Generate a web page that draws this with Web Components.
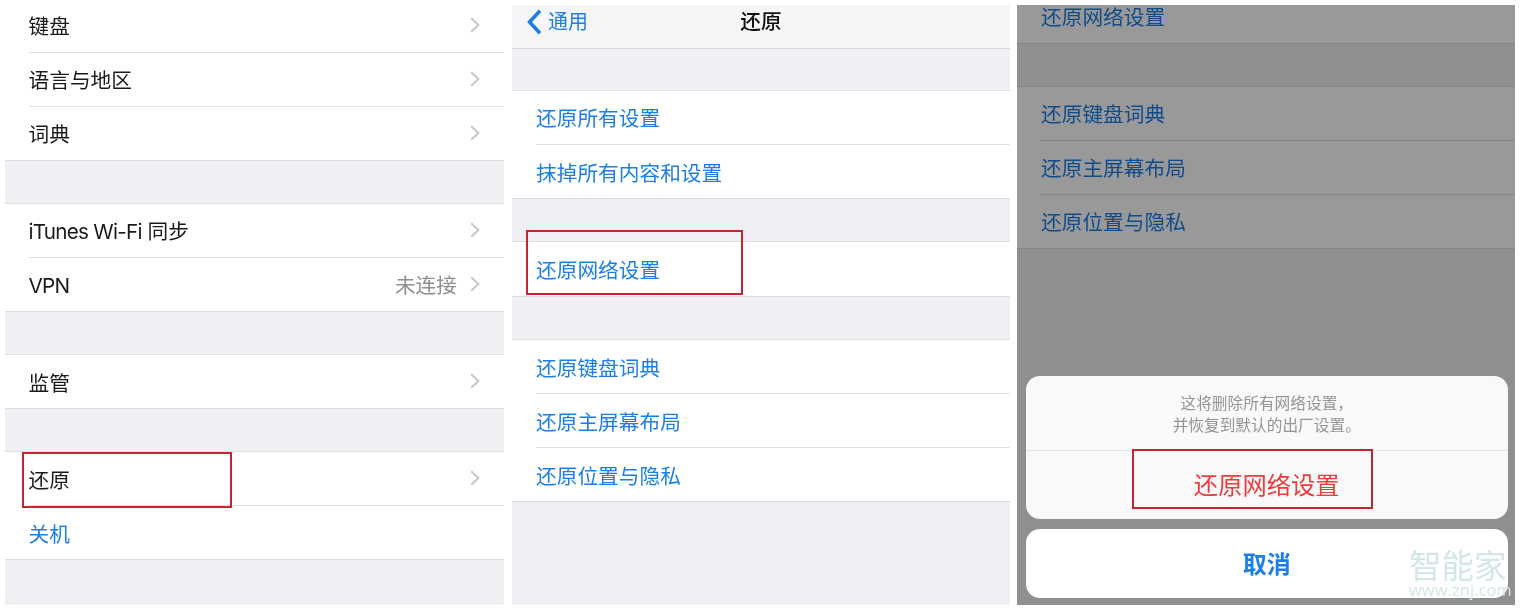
<!DOCTYPE html>
<html lang="zh-CN"><head><meta charset="utf-8"><title>还原</title>
<style>
html,body{margin:0;background:#fff}
body{font-family:"Inter","Noto Sans CJK SC",sans-serif;width:1520px;height:610px;overflow:hidden}
.lat{letter-spacing:-.75px}
</style></head><body>
<phone-stage>
  <settings-panel shift="-6.5" style="width:499px;--inset:23.5px">
    <settings-group><settings-row chevron>键盘</settings-row><settings-row chevron>语言与地区</settings-row><settings-row chevron last>词典</settings-row></settings-group>
    <settings-group><settings-row chevron><span class="lat">iTunes Wi-Fi</span> 同步</settings-row><settings-row chevron last detail="未连接"><span class="lat">VPN</span></settings-row></settings-group>
    <settings-group><settings-row chevron last>监管</settings-row></settings-group>
    <settings-group><settings-row chevron>还原</settings-row><settings-row last tone="link">关机</settings-row></settings-group>
    <red-box style="left:17px;top:447px;width:206px;height:52px"></red-box>
  </settings-panel>
  <settings-panel style="width:498px;--row:54.2px;--inset:24px">
    <nav-bar back="通用">还原</nav-bar>
    <settings-group><settings-row tone="link">还原所有设置</settings-row><settings-row last tone="link">抹掉所有内容和设置</settings-row></settings-group>
    <settings-group><settings-row last tone="link">还原网络设置</settings-row></settings-group>
    <settings-group><settings-row tone="link">还原键盘词典</settings-row><settings-row tone="link">还原主屏幕布局</settings-row><settings-row last tone="link">还原位置与隐私</settings-row></settings-group>
    <red-box style="left:14px;top:225px;width:213px;height:61px"></red-box>
  </settings-panel>
  <settings-panel shift="-15.5" style="width:498px;--inset:24px">
    <settings-group><settings-row last tone="link">还原网络设置</settings-row></settings-group>
    <settings-group><settings-row tone="link">还原键盘词典</settings-row><settings-row tone="link">还原主屏幕布局</settings-row><settings-row last tone="link">还原位置与隐私</settings-row></settings-group>
    <action-sheet message="这将删除所有网络设置，&#10;并恢复到默认的出厂设置。" action="还原网络设置" cancel="取消"></action-sheet>
    <red-box style="left:115px;top:444px;width:237px;height:56px"></red-box>
    <brand-mark></brand-mark>
  </settings-panel>
</phone-stage>
<script>
const def=(name,html)=>customElements.define(name,class extends HTMLElement{
  connectedCallback(){ if(this.shadowRoot) return; const r=this.attachShadow({mode:'open'}); r.innerHTML=typeof html==='function'?html(this):html; }
});
def('phone-stage',`<style>:host{display:flex;padding:5px;height:600px;width:1510px;font-size:20.7px}
 ::slotted(settings-panel:nth-child(1)){margin-right:8px}::slotted(settings-panel:nth-child(2)){margin-right:7px}</style><slot></slot>`);
def('settings-panel',h=>`<style>:host{display:block;position:relative;height:600px;overflow:hidden;background:#efeff4;flex:none;filter:blur(.35px)}
 .in{margin-top:${h.getAttribute('shift')||0}px}</style><div class="in"><slot></slot></div>`);
def('settings-group',`<style>:host{display:block;background:#fff;border-bottom:1px solid #dcdce0;box-shadow:0 -1px 0 #dedee2;margin-bottom:43.3px;box-sizing:border-box}</style><slot></slot>`);
def('settings-row',h=>{
 const link=h.getAttribute('tone')==='link',d=h.getAttribute('detail');
 return `<style>:host{display:block;color:${link?'#1c7fe6':'#1a1a1a'}}
 .r{height:calc(var(--row,54px) - 1px);display:flex;align-items:center;padding:0 24px 0 var(--inset,24px);box-sizing:border-box;line-height:1}
 .t{flex:1;white-space:nowrap;padding-top:5px}
 .d{color:#8e8e93;margin-right:13px;padding-top:5px}
 svg{display:block;width:10px;height:16px;margin-bottom:1px}
 .s{height:1px;background:#e0e0e3;margin-left:var(--inset,24px)}</style>
 <div class="r"><span class="t"><slot></slot></span>${d?`<span class="d">${d}</span>`:''}${h.hasAttribute('chevron')?`<svg viewBox="0 0 10 16"><path d="M1.2 1.2 8.4 8 1.2 14.8" fill="none" stroke="#c7c7cc" stroke-width="2"/></svg>`:''}</div>
 ${h.hasAttribute('last')?'':'<div class="s"></div>'}`;
});
def('nav-bar',h=>`<style>:host{display:block;height:44px;background:#f6f6f8;border-bottom:1px solid #d9d9dd;box-sizing:border-box;margin-bottom:41.7px}
 .b{height:30px;display:grid;grid-template-columns:1fr auto 1fr;align-items:center;padding:0 15px}
 .l{display:flex;align-items:center;gap:6px;color:#1c7fe6;font-size:20px}
 .t{color:#111;font-weight:500}
 svg{width:15px;height:26px;display:block;margin-top:4px}</style>
 <div class="b"><div class="l"><svg viewBox="0 0 15 26"><path d="M13 1.8 2.6 13 13 24.2" fill="none" stroke="#1c7fe6" stroke-width="3.6"/></svg>${h.getAttribute('back')}</div><div class="t"><slot></slot></div><div></div></div>`);
def('action-sheet',h=>{
 const m=h.getAttribute('message').split('\n');
 return `<style>:host{position:absolute;inset:0;background:rgba(0,0,0,.4);display:flex;flex-direction:column;justify-content:flex-end;padding:0 7.5px 7px 9px;gap:10.5px}
 .c{background:#f9f9f9;border-radius:14px;text-align:center}
 .m{height:75px;box-sizing:border-box;padding-top:17px;font-size:15.7px;line-height:22.6px;color:#949494;border-bottom:1px solid #e3e3e5}
 .a{height:68px;box-sizing:border-box;padding-top:19px;color:#ef3b3b;font-size:24.3px;line-height:30px}
 .x{background:#fff;height:69px;display:flex;align-items:center;justify-content:center;color:#1c7fe6;font-size:24px;font-weight:700;padding-bottom:2px;box-sizing:border-box}</style>
 <div class="c"><div class="m">${m.join('<br>')}</div><div class="a">${h.getAttribute('action')}</div></div>
 <div class="c x">${h.getAttribute('cancel')}</div>`;
});
def('red-box',`<style>:host{position:absolute;box-sizing:content-box;border:2px solid #c8242f;display:block}</style>`);
def('brand-mark',`<style>:host{position:absolute;left:392px;top:543px;color:#d3e6e9;line-height:1;white-space:nowrap;font-family:"Noto Sans CJK SC",sans-serif;font-weight:400}
 .a{font-size:32.5px;height:34px}.b{font-family:"Open Sans",sans-serif;font-size:16.6px;margin-top:0;color:#d5e5e8}</style>
 <div class="a">智能家</div><div class="b">www.znj.com</div>`);
</script>
</body></html>
